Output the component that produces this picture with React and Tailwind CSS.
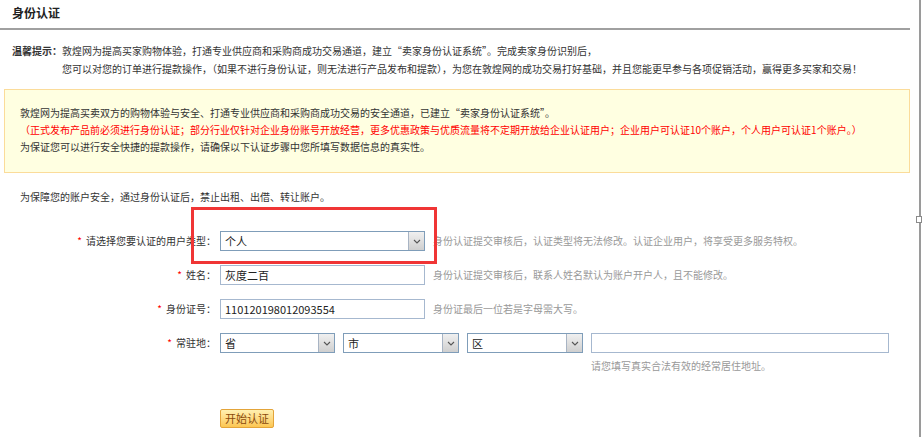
import React from 'react';

const font = { fontFamily: '"Noto Sans CJK SC", "Liberation Sans", sans-serif' };

function Arrow() {
  return (
    <div className="w-[16px] h-full border-l border-[#a8b4c4] bg-gradient-to-b from-[#f0f0f0] to-[#cfcfcf] flex items-center justify-center">
      <svg width="8" height="5" viewBox="0 0 8 5">
        <path d="M1 1 L4 4 L7 1" stroke="#555" strokeWidth="1.1" fill="none" />
      </svg>
    </div>
  );
}

function FakeSelect({ value, width }) {
  return (
    <div className={`${width} h-[20px] border border-[#7f9db9] bg-white flex items-stretch`}>
      <div className="flex-1 pl-[4px] text-[11px] leading-[18px] text-[#222]">{value}</div>
      <Arrow />
    </div>
  );
}

function TextBox({ value, width }) {
  return (
    <div className={`${width} h-[20px] border border-[#a6b8cf] bg-white pl-[4px] text-[11px] leading-[18px] text-[#222]`}>
      {value}
    </div>
  );
}

function Label({ children }) {
  return (
    <div className="w-[220px] pr-[4px] text-right text-[10px] leading-[20px] text-[#333] whitespace-nowrap">
      <span className="text-[#f00] mr-[4px]">*</span>
      {children}
    </div>
  );
}

function Help({ children }) {
  return <div className="ml-[8px] text-[10px] leading-[20px] text-[#999] whitespace-nowrap">{children}</div>;
}

export default function App() {
  return (
    <div className="relative w-[923px] h-[437px] bg-white flex overflow-hidden" style={font}>
      {/* main column */}
      <div className="w-[919px] flex flex-col">
        <div className="w-[910px] h-[30px] border-b-2 border-[#a0a0a0] pl-[12px] pt-[5px] text-[12px] font-bold leading-[16px] text-[#222]">
          身份认证
        </div>

        {/* tip */}
        <div className="mt-[12px] pl-[12px] flex text-[10px] leading-[18px] text-[#333]">
          <div className="w-[50px] font-bold whitespace-nowrap">温馨提示：</div>
          <div className="whitespace-nowrap">
            <div>敦煌网为提高买家购物体验，打通专业供应商和采购商成功交易通道，建立“卖家身份认证系统”。完成卖家身份识别后，</div>
            <div>您可以对您的订单进行提款操作，（如果不进行身份认证，则无法进行产品发布和提款），为您在敦煌网的成功交易打好基础，并且您能更早参与各项促销活动，赢得更多买家和交易！</div>
          </div>
        </div>

        {/* yellow notice */}
        <div className="ml-[4px] mt-[11px] w-[906px] h-[84px] border border-[#fbdc9a] bg-[#ffffe1] pl-[15px] pt-[14px] text-[10px] leading-[17px] whitespace-nowrap">
          <div className="text-[#333]">敦煌网为提高买卖双方的购物体验与安全、打通专业供应商和采购商成功交易的安全通道，已建立“卖家身份认证系统”。</div>
          <div className="text-[#f00]">（正式发布产品前必须进行身份认证；部分行业仅针对企业身份账号开放经营，更多优惠政策与优质流量将不定期开放给企业认证用户；企业用户可认证10个账户，个人用户可认证1个账户。）</div>
          <div className="text-[#333]">为保证您可以进行安全快捷的提款操作，请确保以下认证步骤中您所填写数据信息的真实性。</div>
        </div>

        <div className="mt-[15px] pl-[20px] text-[10px] leading-[17px] text-[#333]">
          为保障您的账户安全，通过身份认证后，禁止出租、出借、转让账户。
        </div>

        {/* form */}
        <div className="mt-[26px] flex flex-col gap-[14px]">
          <div className="flex items-center h-[20px]">
            <Label>请选择您要认证的用户类型：</Label>
            <FakeSelect value="个人" width="w-[205px]" />
            <Help>身份认证提交审核后，认证类型将无法修改。认证企业用户，将享受更多服务特权。</Help>
          </div>
          <div className="flex items-center h-[20px]">
            <Label>姓名：</Label>
            <TextBox value="灰度二百" width="w-[205px]" />
            <Help>身份认证提交审核后，联系人姓名默认为账户开户人，且不能修改。</Help>
          </div>
          <div className="flex items-center h-[20px]">
            <Label>身份证号：</Label>
            <TextBox value="110120198012093554" width="w-[205px]" />
            <Help>身份证最后一位若是字母需大写。</Help>
          </div>
          <div className="flex items-center h-[20px]">
            <Label>常驻地：</Label>
            <FakeSelect value="省" width="w-[115px]" />
            <div className="ml-[8px]"><FakeSelect value="市" width="w-[116px]" /></div>
            <div className="ml-[8px]"><FakeSelect value="区" width="w-[116px]" /></div>
            <div className="ml-[8px]"><TextBox value="" width="w-[298px]" /></div>
          </div>
        </div>
        <div className="ml-[591px] mt-[6px] text-[10px] leading-[14px] text-[#999]">请您填写真实合法有效的经常居住地址。</div>

        <div className="ml-[220px] mt-[31px]">
          <button className="w-[54px] h-[19px] rounded-[2px] border border-[#e3a43a] bg-gradient-to-b from-[#fff0b0] to-[#fcc651] text-[11px] leading-[17px] text-[#8a4a0c]">
            开始认证
          </button>
        </div>
      </div>

      {/* right frame line */}
      <div className="relative w-[2px] h-full bg-[#9a9a9a]">
        <div className="absolute left-[-3px] top-[216px] w-[6px] h-[7px] border border-[#8a8a8a] bg-white" />
      </div>

      {/* red annotation box */}
      <div className="absolute left-[191px] top-[207px] w-[246px] h-[57px] border-[3px] border-[#f03535]" />
    </div>
  );
}
